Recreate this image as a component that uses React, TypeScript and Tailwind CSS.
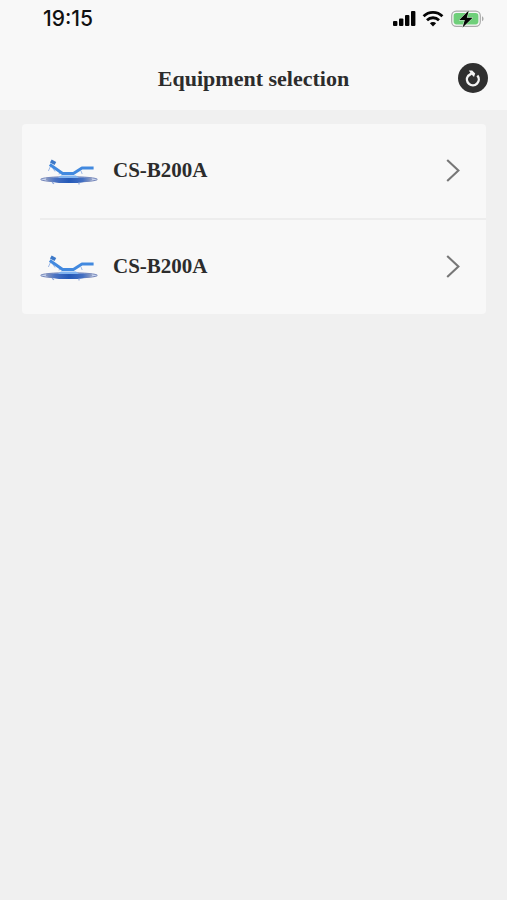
const devices = [
  { id: 1, name: "CS-B200A" },
  { id: 2, name: "CS-B200A" },
];

function StatusIcons() {
  return (
    <svg width="92" height="20" viewBox="0 0 92 20" aria-hidden="true">
      {/* signal */}
      <g fill="#050505">
        <rect x="1" y="12" width="4.4" height="5" rx="1" />
        <rect x="7" y="9.5" width="4.4" height="7.5" rx="1" />
        <rect x="13" y="6" width="4.4" height="11" rx="1" />
        <rect x="19" y="2" width="4.4" height="15" rx="1" />
      </g>

      {/* wifi */}
      <g fill="none" stroke="#050505" strokeWidth="2.8">
        <path d="M31.6 7.2a13.4 13.4 0 0 1 18.8 0" />
        <path d="M35 11.2a8.6 8.6 0 0 1 12 0" />
      </g>
      <path d="M41 17.4l-3.1-3.1a4.4 4.4 0 0 1 6.2 0z" fill="#050505" />

      {/* battery */}
      <rect x="59.7" y="2.2" width="28.6" height="15.1" rx="4.6" fill="none" stroke="#a9aaa9" strokeWidth="1.2" />
      <rect x="61.6" y="4.1" width="24.8" height="11.3" rx="2.8" fill="#6fcf7a" />
      <path d="M90 7.3c2 .7 2 4.3 0 5z" fill="#a9aaa9" />
      <path
        d="M76.8 1.6L67.2 11h5.6l-2.2 7.4L80.6 8.8h-5.8z"
        fill="#050505"
        stroke="#dff3e1"
        strokeWidth="1"
        paintOrder="stroke"
      />
    </svg>
  );
}

function BedIcon() {
  return (
    <svg width="60" height="32" viewBox="0 0 60 32" className="shrink-0" aria-hidden="true">
      <defs>
        <linearGradient id="base" x1="0" x2="1">
          <stop offset="0" stopColor="#8d9ac0" />
          <stop offset="0.2" stopColor="#4a72c2" />
          <stop offset="0.5" stopColor="#2459b8" />
          <stop offset="0.8" stopColor="#4470c2" />
          <stop offset="1" stopColor="#98a3c4" />
        </linearGradient>
      </defs>
      <ellipse cx="29" cy="24.4" rx="28.3" ry="2.7" fill="#c9d5ee" stroke="#7485b8" strokeWidth="1" />
      <path d="M8 22.6h42c3 1 3 2.4 0 3.4l-12 2H19L8 26c-3-1-3-2.4 0-3.4z" fill="url(#base)" />
      <path d="M21 20.4h15l3 2.6H18z" fill="#82b4ef" />
      <path d="M12 27.2l2 1.6M39 27.6v2" stroke="#8fa8da" strokeWidth="1.2" fill="none" />
      <path d="M10.6 11l-2.2 5M12.5 12.5l2.5 4M41 16l1.2 3M20 16.5l-1 3" stroke="#9fb9e6" strokeWidth="1" fill="none" />
      <path d="M9.8 9.4L22.6 18.4H33.4L42 13H53.6" fill="none" stroke="#4289df" strokeWidth="3" strokeLinejoin="round" />
      <path d="M10.8 6l4.6 2.6" stroke="#3c78c8" strokeWidth="3.4" />
    </svg>
  );
}

export default function App() {
  return (
    <div className="min-h-screen bg-[#f0f0f0] text-[#2c2c2c]">
      <header className="bg-[#f8f8f8]">
        <div className="flex h-[38px] items-center justify-between pl-[43px] pr-[23px]">
          <span className="font-['Inter',sans-serif] text-[21px] font-medium text-[#111111]">19:15</span>
          <StatusIcons />
        </div>

        <div className="grid h-[72px] grid-cols-[30px_1fr_30px] items-center px-[19px] pt-2">
          <h1 className="col-start-2 text-center font-['Liberation_Serif',serif] text-[22px] font-bold">
            Equipment selection
          </h1>
          <button
            aria-label="Refresh"
            className="flex size-[30px] items-center justify-center rounded-full bg-[#303030]"
          >
            <svg width="30" height="30" viewBox="0 0 30 30" fill="none" aria-hidden="true">
              <path d="M19.4 12.6a5.9 5.9 0 1 1-9.3.3L13.4 10.6" stroke="#f4f4f4" strokeWidth="2.4" />
              <path d="M10.8 7.4h3.4l3 3.2-1.2 3.4-2.4-2.6z" fill="#f4f4f4" />
            </svg>
          </button>
        </div>
      </header>

      <main className="px-[21px] pt-[14px]">
        <ul className="ml-px rounded-sm bg-[#f8f8f8] font-['Liberation_Serif',serif]">
          {devices.map((device, i) => (
            <li key={device.id} className="pl-[18px]">
              <button
                className={
                  i > 0
                    ? "flex h-24 w-full items-center border-t-2 border-[#ededed] pr-[26px] text-left"
                    : "flex h-[94px] w-full items-center pr-[26px] text-left"
                }
              >
                <BedIcon />
                <span className="ml-[13px] flex-1 text-[21px] font-bold">{device.name}</span>
                <svg width="14" height="24" viewBox="0 0 14 24" fill="none" aria-hidden="true">
                  <path d="M1.2 1L12.4 11.5 1.2 22" stroke="#777777" strokeWidth="2.1" />
                </svg>
              </button>
            </li>
          ))}
        </ul>
      </main>
    </div>
  );
}
